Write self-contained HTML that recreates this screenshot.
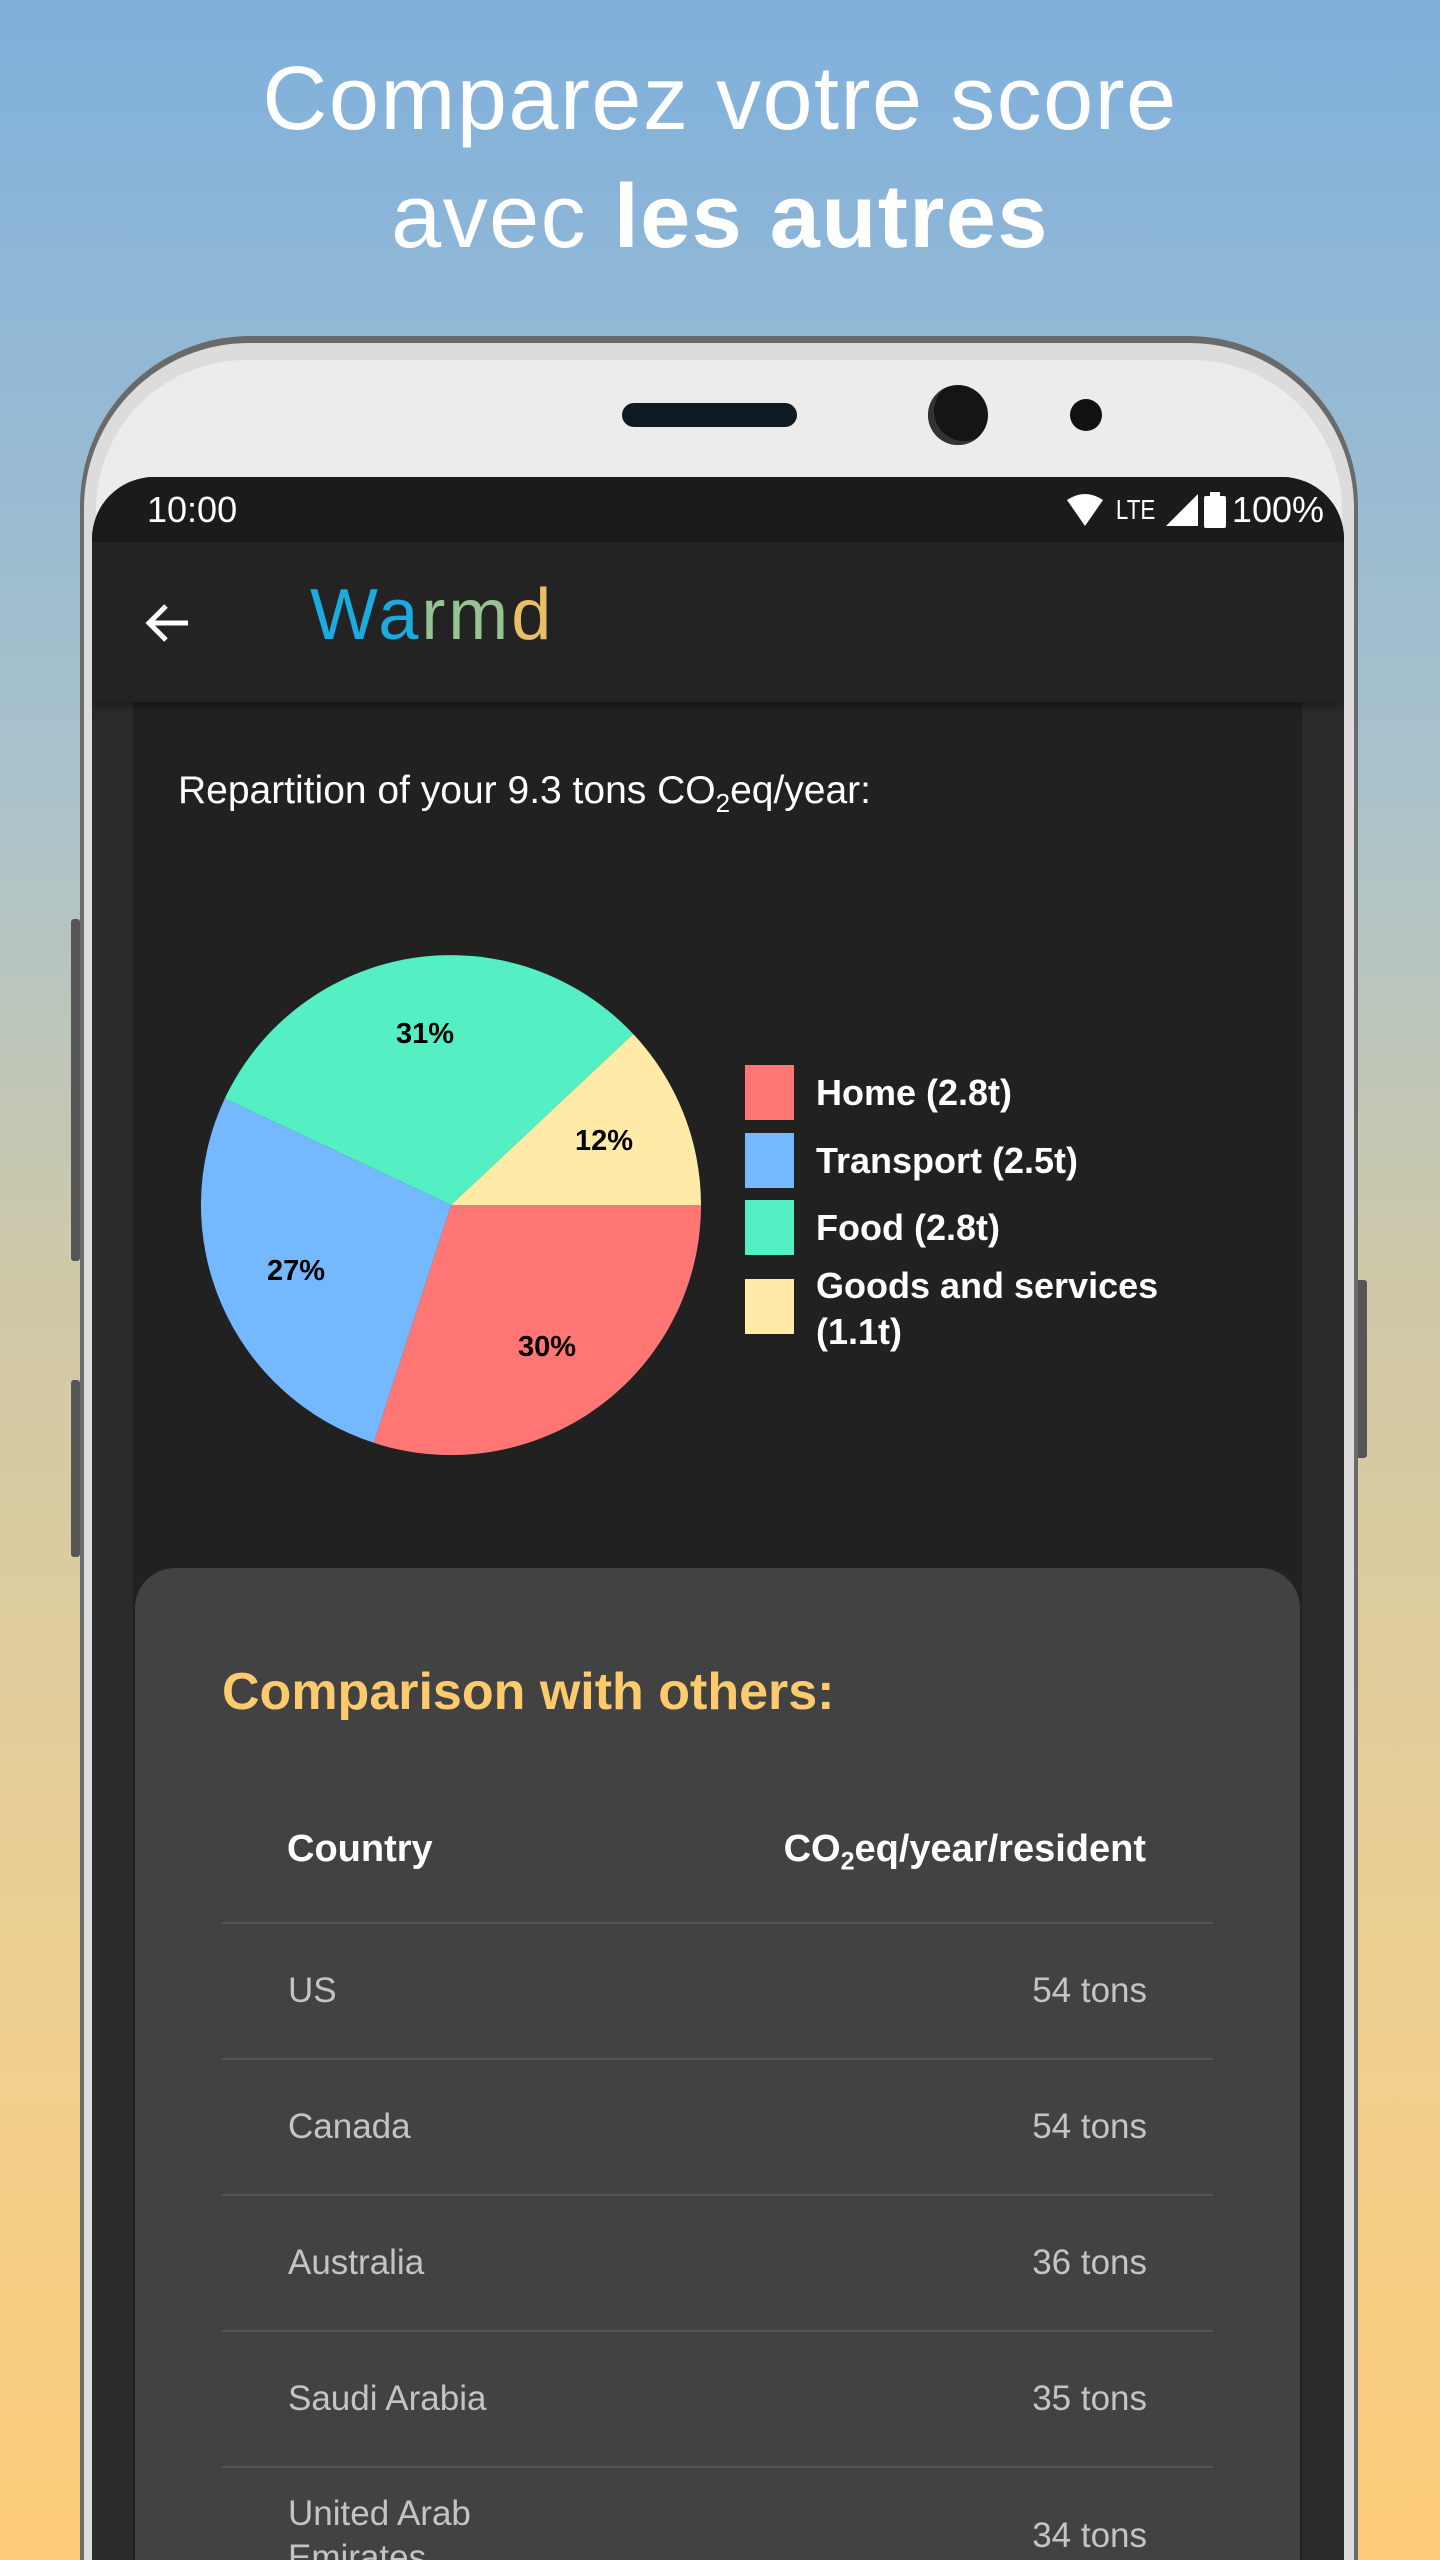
<!DOCTYPE html>
<html><head><meta charset="utf-8">
<style>
*{margin:0;padding:0;box-sizing:border-box}
html,body{width:1440px;height:2560px;overflow:hidden}
body{font-family:"Liberation Sans",sans-serif}
#w{position:relative;width:1440px;height:2560px;overflow:hidden;
background:linear-gradient(180deg,#7fb0dc 0%,#a9c2cc 30%,#cfc9a8 50%,#f0cf8e 80%,#fccb77 100%);}
.h{position:absolute;left:0;width:1440px;text-align:center;color:#fff;font-size:90px;line-height:1;letter-spacing:1.5px}
.btn{position:absolute;background:#555;border-radius:3px}
</style></head><body><div id="w">
<div class="h" style="top:54px">Comparez votre score</div>
<div class="h" style="top:172px">avec <b>les autres</b></div>

<div class="btn" style="left:71px;top:919px;width:9px;height:342px"></div>
<div class="btn" style="left:71px;top:1380px;width:9px;height:177px"></div>
<div class="btn" style="left:1354px;top:1280px;width:13px;height:178px"></div>

<div style="position:absolute;left:80px;top:336px;width:1278px;height:2224px;background:#6a6a6a;border-radius:170px 170px 0 0"></div>
<div style="position:absolute;left:84px;top:343px;width:1270px;height:2217px;background:#dcdcdc;border-radius:165px 165px 0 0"></div>
<div style="position:absolute;left:96px;top:360px;width:1246px;height:2200px;background:#ececec;border-radius:150px 150px 0 0"></div>
<div style="position:absolute;left:622px;top:403px;width:175px;height:24px;background:#0f1a22;border-radius:12px"></div>
<div style="position:absolute;left:928px;top:385px;width:60px;height:60px;background:#151515;border-radius:50%;box-shadow:inset 6px -4px 0 #333"></div>
<div style="position:absolute;left:1070px;top:399px;width:32px;height:32px;background:#111;border-radius:50%"></div>

<div style="position:absolute;left:92px;top:477px;width:1252px;height:2083px;background:#2b2b2b;border-radius:62px 62px 0 0;overflow:hidden">
  <div style="position:absolute;left:0;top:0;width:100%;height:65px;background:#1b1b1b"></div>
  <div style="position:absolute;left:55px;top:12px;color:#fff;font-size:36px">10:00</div>
  <div style="position:absolute;right:20px;top:12px;color:#fff;font-size:36px;display:flex;align-items:center;gap:6px">
    <svg width="40" height="36" viewBox="0 0 40 36"><path d="M2 8 Q20 -4 38 8 L20 34 Z" fill="#fff"/></svg>
    <span style="font-size:28px;transform:scaleX(.8);display:inline-block">LTE</span>
    <svg width="32" height="32" viewBox="0 0 32 32"><path d="M32 0 V32 H0 Z" fill="#fff"/></svg>
    <svg width="22" height="36" viewBox="0 0 22 36"><rect x="6" y="0" width="10" height="4" fill="#fff"/><rect x="0" y="4" width="22" height="32" rx="2" fill="#fff"/></svg>
    <span>100%</span>
  </div>
  <div style="position:absolute;left:0;top:65px;width:100%;height:160px;background:#232323;box-shadow:0 4px 8px rgba(0,0,0,.35);z-index:2">
    <svg style="position:absolute;left:52px;top:57px" width="48" height="48" viewBox="0 0 48 48"><path d="M44 24 H6 M22 7 L5 24 L22 41" stroke="#fff" stroke-width="5" fill="none"/></svg>
    <div style="position:absolute;left:218px;top:32px;font-size:72px;letter-spacing:3px;opacity:.95"><span style="color:#1bb3e8">Wa</span><span style="color:#9dcb9b">rm</span><span style="color:#f4c86a">d</span></div>
  </div>
  <div style="position:absolute;left:41px;top:225px;width:1169px;height:1858px;background:#212121">
    <div style="position:absolute;left:45px;top:67px;color:#fff;font-size:39px">Repartition of your 9.3 tons CO<sub style="font-size:26px">2</sub>eq/year:</div>
    <svg style="position:absolute;left:0;top:0" width="1169" height="800" viewBox="133 702 1169 800">
      <path d="M451 1205 L701 1205 A250 250 0 0 1 373.7 1442.8 Z" fill="#ff7675"/>
      <path d="M451 1205 L373.7 1442.8 A250 250 0 0 1 224.8 1098.5 Z" fill="#74b9ff"/>
      <path d="M451 1205 L224.8 1098.5 A250 250 0 0 1 633.2 1034 Z" fill="#55efc4"/>
      <path d="M451 1205 L633.2 1034 A250 250 0 0 1 701 1205 Z" fill="#ffeaa7"/>
      <g font-family="Liberation Sans" font-weight="bold" font-size="29" fill="#000" text-anchor="middle">
        <text x="425" y="1043">31%</text><text x="604" y="1150">12%</text>
        <text x="296" y="1280">27%</text><text x="547" y="1356">30%</text>
      </g>
      <rect x="745" y="1065" width="49" height="55" fill="#ff7675"/>
      <rect x="745" y="1133" width="49" height="55" fill="#74b9ff"/>
      <rect x="745" y="1200" width="49" height="55" fill="#55efc4"/>
      <rect x="745" y="1279" width="49" height="55" fill="#ffeaa7"/>
      <g font-family="Liberation Sans" font-size="36" fill="#fff" font-weight="bold">
        <text x="816" y="1105">Home (2.8t)</text><text x="816" y="1173">Transport (2.5t)</text>
        <text x="816" y="1240">Food (2.8t)</text><text x="816" y="1298">Goods and services</text><text x="816" y="1344">(1.1t)</text>
      </g>
    </svg>
  </div>
  <div style="position:absolute;left:43px;top:1091px;width:1165px;height:992px;background:#424242;border-radius:40px 40px 0 0;overflow:hidden">
    <div style="position:absolute;left:87px;top:94px;color:#fdcb6e;font-size:52px;font-weight:bold">Comparison with others:</div>
    <div style="position:absolute;left:87px;top:354px;width:991px;height:2px;background:#555"></div>
    <div style="position:absolute;left:152px;top:260px;color:#fff;font-size:38px;font-weight:bold">Country</div>
    <div style="position:absolute;right:154px;top:260px;color:#fff;font-size:38px;font-weight:bold">CO<sub style="font-size:25px">2</sub>eq/year/resident</div>
    <div style="position:absolute;left:87px;top:356px;width:991px;color:#c4c4c4;font-size:35px">
      <div style="height:136px;border-bottom:2px solid #555;display:flex;justify-content:space-between;align-items:center;padding:0 66px">US<span>54 tons</span></div>
      <div style="height:136px;border-bottom:2px solid #555;display:flex;justify-content:space-between;align-items:center;padding:0 66px">Canada<span>54 tons</span></div>
      <div style="height:136px;border-bottom:2px solid #555;display:flex;justify-content:space-between;align-items:center;padding:0 66px">Australia<span>36 tons</span></div>
      <div style="height:136px;border-bottom:2px solid #555;display:flex;justify-content:space-between;align-items:center;padding:0 66px">Saudi Arabia<span>35 tons</span></div>
      <div style="height:136px;display:flex;justify-content:space-between;align-items:center;padding:0 66px"><span style="line-height:44px">United Arab<br>Emirates</span><span>34 tons</span></div>
    </div>
  </div>
</div>
</div></body></html>
